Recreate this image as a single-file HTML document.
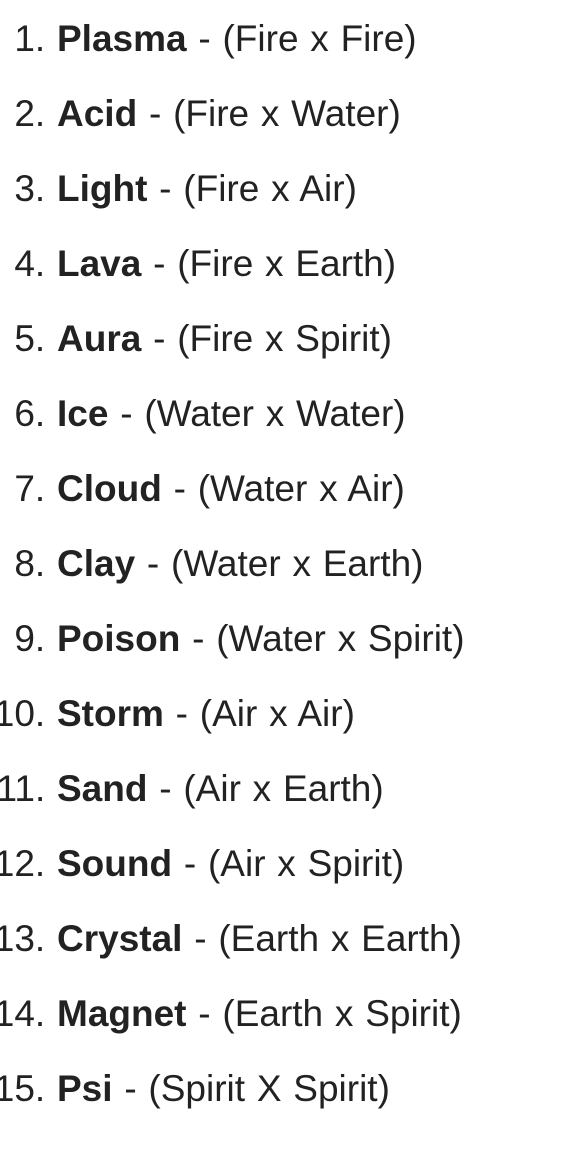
<!DOCTYPE html>
<html><head><meta charset="utf-8"><style>
html,body{margin:0;padding:0;background:#fff;width:564px;height:1149px;overflow:hidden}
ol{margin:0;padding:0 0 0 57px;position:absolute;top:1px;left:0;font-family:"Liberation Sans",Arial,sans-serif;font-size:37px;color:#222;line-height:75px;word-spacing:1.5px}
li::marker{font-weight:normal}
b{font-weight:bold}
</style></head><body>
<ol>
<li><b>Plasma</b> - (Fire x Fire)</li>
<li><b>Acid</b> - (Fire x Water)</li>
<li><b>Light</b> - (Fire x Air)</li>
<li><b>Lava</b> - (Fire x Earth)</li>
<li><b>Aura</b> - (Fire x Spirit)</li>
<li><b>Ice</b> - (Water x Water)</li>
<li><b>Cloud</b> - (Water x Air)</li>
<li><b>Clay</b> - (Water x Earth)</li>
<li><b>Poison</b> - (Water x Spirit)</li>
<li><b>Storm</b> - (Air x Air)</li>
<li><b>Sand</b> - (Air x Earth)</li>
<li><b>Sound</b> - (Air x Spirit)</li>
<li><b>Crystal</b> - (Earth x Earth)</li>
<li><b>Magnet</b> - (Earth x Spirit)</li>
<li><b>Psi</b> - (Spirit X Spirit)</li>
</ol>
</body></html>
